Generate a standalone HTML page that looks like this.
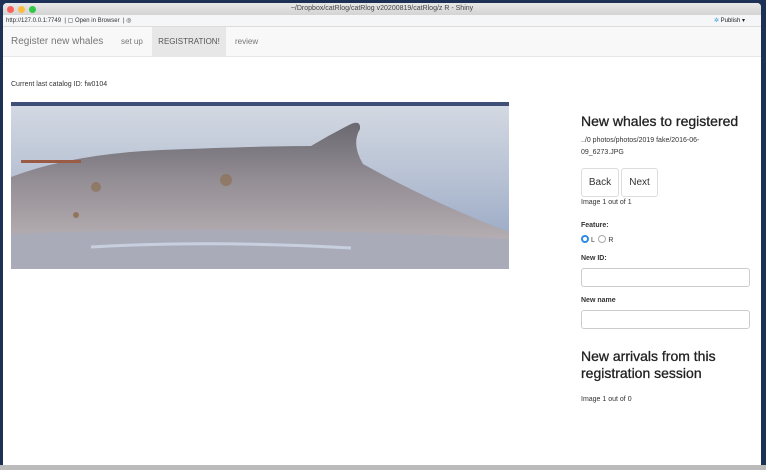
<!DOCTYPE html>
<html><head><style>
*{box-sizing:border-box;margin:0;padding:0}
body{width:766px;height:470px;background:#1d3157;position:relative;overflow:hidden;font-family:"Liberation Sans",sans-serif;color:#333}
.win{position:absolute;left:3px;top:3px;width:758px;height:462px;background:#fff;border-radius:4px 4px 0 0;overflow:hidden}
.title{height:12px;background:linear-gradient(#e8e8e8,#d3d3d3);font-size:7px;text-align:center;line-height:12px;color:#444;position:relative}
.dot{position:absolute;top:3px;width:7px;height:7px;border-radius:50%}
.tool{height:12px;background:#f4f6f7;border-bottom:1px solid #dcdcdc;font-size:6px;line-height:12px;color:#333;position:relative;padding-left:3px}
.nav{height:30px;background:#f8f8f8;border-bottom:1px solid #e7e7e7;position:relative;font-size:8px;color:#777}
.nav span{position:absolute;top:0;line-height:30px}
.bottom{position:absolute;left:0;top:465px;width:766px;height:5px;background:#bbb}
.r{position:absolute;font-size:7px;color:#333}
h3{position:absolute;font-size:14px;font-weight:normal;color:#222;line-height:17px;-webkit-text-stroke:0.3px #222}
.btn{position:absolute;top:168px;height:29px;border:1px solid #ddd;border-radius:3px;font-size:10px;line-height:27px;text-align:center;color:#333;background:#fff}
.inp{position:absolute;left:581px;width:169px;height:19px;border:1px solid #ccc;border-radius:3px}
b{font-weight:bold}
</style></head><body>
<div class="win">
<div class="title"><div class="dot" style="left:4px;background:#fc605b"></div><div class="dot" style="left:15px;background:#fdbc40"></div><div class="dot" style="left:26px;background:#34c84a"></div>~/Dropbox/catRlog/catRlog v20200819/catRlog/z R - Shiny</div>
<div class="tool">http://127.0.0.1:7749 &nbsp;| ▢ Open in Browser &nbsp;| ◎<span style="position:absolute;right:16px;color:#222"><span style="color:#3a9ad9">✲</span> Publish ▾</span></div>
<div class="nav"><span style="left:8px;font-size:10px">Register new whales</span><span style="left:118px">set up</span><span style="left:149px;width:74px;background:#e7e7e7;text-align:center;color:#555">REGISTRATION!</span><span style="left:232px">review</span></div>
</div>
<div class="r" style="left:11px;top:81px">Current last catalog ID: fw0104</div>
<svg style="position:absolute;left:11px;top:102px" width="498" height="167" viewBox="0 0 498 167">
<defs><linearGradient id="w" x1="0" y1="0" x2="0" y2="1"><stop offset="0" stop-color="#d5dae3"/><stop offset=".5" stop-color="#b4bfd2"/><stop offset="1" stop-color="#8e9fbf"/></linearGradient>
<linearGradient id="b" x1="0" y1="0" x2="0" y2="1"><stop offset="0" stop-color="#6a6870"/><stop offset=".5" stop-color="#948e95"/><stop offset="1" stop-color="#b4aeb2"/></linearGradient></defs>
<rect width="498" height="167" fill="url(#w)"/>
<rect width="498" height="4" fill="#3f4f78"/>
<path d="M0 75 Q60 52 150 48 Q250 44 300 44 Q320 32 340 22 Q350 18 349 27 Q340 42 352 62 Q420 100 498 130 L498 137 L0 132 Z" fill="url(#b)"/>
<rect x="10" y="58" width="60" height="3" fill="#9a5a44"/>
<path d="M0 132 Q250 122 498 137 L498 167 L0 167Z" fill="#a9abb8"/>
<path d="M80 145 Q200 138 340 146" stroke="#c8d0e0" stroke-width="3" fill="none"/>
<circle cx="85" cy="85" r="5" fill="#8d6b4a" opacity=".6"/><circle cx="215" cy="78" r="6" fill="#8d6b4a" opacity=".6"/><circle cx="65" cy="113" r="3" fill="#8d6b4a" opacity=".8"/>
</svg>
<h3 style="left:581px;top:113px">New whales to registered</h3>
<div class="r" style="left:581px;top:135px;line-height:12px">../0 photos/photos/2019 fake/2016-06-<br>09_6273.JPG</div>
<div class="btn" style="left:581px;width:38px">Back</div>
<div class="btn" style="left:621px;width:37px">Next</div>
<div class="r" style="left:581px;top:199px">Image 1 out of 1</div>
<div class="r" style="left:581px;top:222px"><b>Feature:</b></div>
<div class="r" style="left:581px;top:235px"><span style="display:inline-block;width:8px;height:8px;border-radius:50%;border:2.5px solid #2e8be6;vertical-align:-1px"></span> L &nbsp;<span style="display:inline-block;width:8px;height:8px;border-radius:50%;border:1px solid #aaa;vertical-align:-1px"></span> R</div>
<div class="r" style="left:581px;top:255px"><b>New ID:</b></div>
<div class="inp" style="top:268px"></div>
<div class="r" style="left:581px;top:297px"><b>New name</b></div>
<div class="inp" style="top:310px"></div>
<h3 style="left:581px;top:348px">New arrivals from this<br>registration session</h3>
<div class="r" style="left:581px;top:396px">Image 1 out of 0</div>
<div class="bottom"></div>
</body></html>
